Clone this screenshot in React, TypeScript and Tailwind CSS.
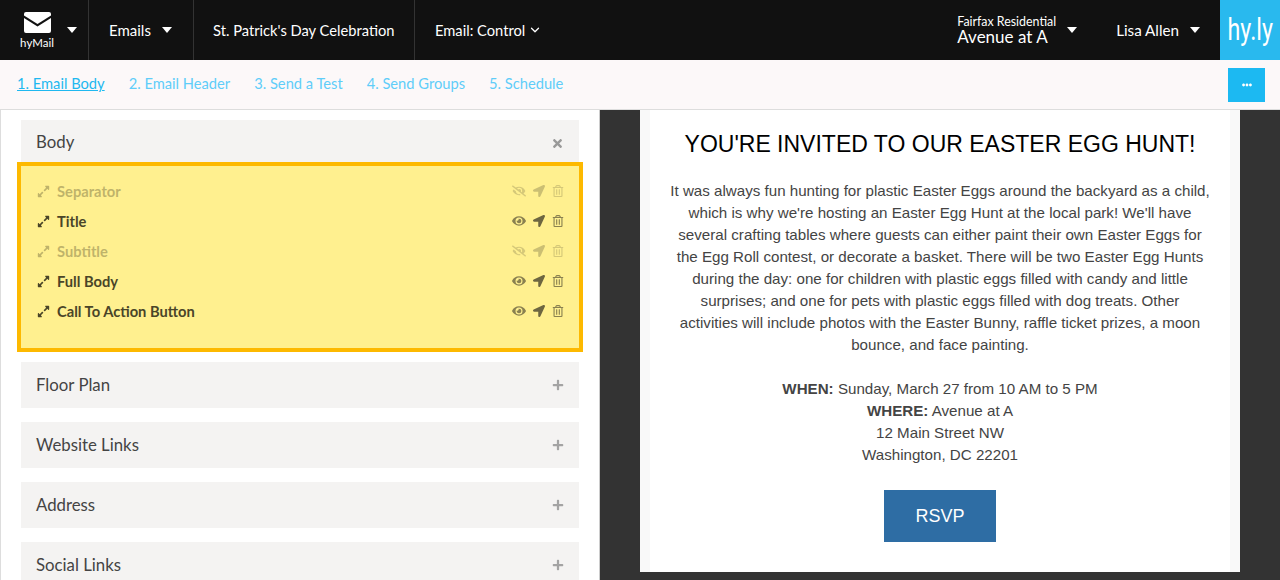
import { ChevronDown } from "lucide-react";
import {
  FaEllipsisH,
  FaExpandAlt,
  FaEye,
  FaEyeSlash,
  FaLocationArrow,
  FaPlus,
  FaRegTrashAlt,
  FaTimes,
} from "react-icons/fa";

const steps = ["1. Email Body", "2. Email Header", "3. Send a Test", "4. Send Groups", "5. Schedule"];

const rows = [
  { name: "Separator", hidden: true },
  { name: "Title", hidden: false },
  { name: "Subtitle", hidden: true },
  { name: "Full Body", hidden: false },
  { name: "Call To Action Button", hidden: false },
];

function Caret() {
  return (
    <svg width="10" height="6" viewBox="0 0 10 6" className="shrink-0">
      <path d="M0 0h10L5 6z" fill="#fff" />
    </svg>
  );
}

function Section({ title }: { title: string }) {
  return (
    <div className="flex h-[46px] shrink-0 items-center justify-between bg-[#f4f3f2] pl-[15px] pr-[15px]">
      <span className="text-[16.8px] text-[#444]">{title}</span>
      <FaPlus className="text-[12px] text-[#a3a3a3]" />
    </div>
  );
}

export default function App() {
  return (
    <div className="flex h-[580px] flex-col overflow-hidden bg-white font-['Lato',sans-serif]">
      {/* top bar */}
      <header className="flex h-[60px] shrink-0 items-stretch bg-[#111] text-white">
        <div className="flex w-[89px] items-center border-r border-[#333] pl-5">
          <div className="flex w-[34px] flex-col items-center">
            <svg width="27" height="21" viewBox="0 0 27 21">
              <path d="M2 0h23a2 2 0 0 1 2 2v1.5L13.5 12 0 3.5V2a2 2 0 0 1 2-2z" fill="#fff" />
              <path d="M0 6l13.5 8.5L27 6v13a2 2 0 0 1-2 2H2a2 2 0 0 1-2-2z" fill="#fff" />
            </svg>
            <span className="mt-[3px] text-[11.5px] leading-[13px]">hyMail</span>
          </div>
          <span className="ml-[13px]">
            <Caret />
          </span>
        </div>
        <div className="flex w-[105px] items-center gap-[11px] border-r border-[#333] pl-5 text-[15px]">
          Emails <Caret />
        </div>
        <div className="flex w-[221px] items-center border-r border-[#333] pl-[19px] text-[14.7px]">
          St. Patrick's Day Celebration
        </div>
        <div className="flex items-center gap-[3px] pl-5 text-[14.7px]">
          Email: Control <ChevronDown size={14} strokeWidth={2.2} />
        </div>
        <div className="ml-auto flex items-center">
          <div className="flex flex-col">
            <span className="text-[12.4px] leading-[13px]">Fairfax Residential</span>
            <span className="text-[17px] leading-[18px]">Avenue at A</span>
          </div>
          <span className="ml-[11px]">
            <Caret />
          </span>
          <span className="ml-[39px] text-[15.2px]">Lisa Allen</span>
          <span className="ml-[11px] mr-5">
            <Caret />
          </span>
        </div>
        <div className="flex w-[60px] items-center justify-center bg-[#29b9ee] text-[31px] font-['Roboto',sans-serif]">
          <span className="scale-x-75">hy.ly</span>
        </div>
      </header>

      {/* steps */}
      <nav className="flex h-[50px] shrink-0 items-center border-b border-[#ddd] bg-[#fcf8f9] pb-[2px] pl-[17px] pr-[15px] text-[14.7px] text-[#5fcdf9]">
        <div className="flex gap-6">
          {steps.map((step, i) => (
            <span key={step} className={i === 0 ? "text-[#1fb8f0] underline" : ""}>
              {step}
            </span>
          ))}
        </div>
        <button className="ml-auto mt-[2px] flex h-[34px] w-[37px] items-center justify-center bg-[#1cb9f2] text-[10px] text-white">
          <FaEllipsisH />
        </button>
      </nav>

      <div className="flex min-h-0 flex-1">
        {/* left column */}
        <aside className="flex w-[600px] shrink-0 flex-col overflow-hidden border-x border-l-[#ddd] border-r-[#ccc] pt-[10px]">
          <div className="mx-5 flex h-[42px] shrink-0 items-start justify-between bg-[#f4f3f2] pl-[15px] pr-[15px] pt-[12px]">
            <span className="text-[16.8px] leading-[20px] text-[#444]">Body</span>
            <FaTimes className="mt-[5px] text-[13px] text-[#999]" />
          </div>
          <div className="mx-4 flex h-[190px] shrink-0 flex-col border-4 border-[#fdb900] bg-[#fff08f] pl-4 pr-[15px] pt-[10px]">
            {rows.map((row) => (
              <div
                key={row.name}
                className={`flex h-[30px] items-center text-[14.7px] font-bold text-[#4a4528] ${row.hidden ? "opacity-35" : ""}`}
              >
                <FaExpandAlt className="mr-[7px] text-[13px]" />
                <span>{row.name}</span>
                <span className="ml-auto flex items-center gap-[7px] text-[#8a8150]">
                  {row.hidden ? <FaEyeSlash className="text-[14px]" /> : <FaEye className="text-[14px]" />}
                  <FaLocationArrow className="text-[12px] text-[#6d6640]" />
                  <FaRegTrashAlt className="text-[12px]" />
                </span>
              </div>
            ))}
          </div>
          <div className="mx-5 mt-[10px] flex flex-col gap-[14px]">
            {["Floor Plan", "Website Links", "Address", "Social Links"].map((title) => (
              <Section key={title} title={title} />
            ))}
          </div>
        </aside>

        {/* email preview */}
        <main className="min-w-0 flex-1 bg-[#333] px-10">
          <div className="h-[462px] bg-[#f9f9f9] px-[10px]">
            <div className="flex h-full flex-col items-center bg-white px-5 text-center font-['Liberation_Sans',sans-serif] text-[15.15px] leading-[22px] text-[#444]">
              <h1 className="mt-[19px] whitespace-nowrap text-[23px] leading-[30px] text-black">YOU'RE INVITED TO OUR EASTER EGG HUNT!</h1>
              <p className="mt-[21px]">
                It was always fun hunting for plastic Easter Eggs around the backyard as a child, which is why we're hosting an Easter Egg Hunt at the local park! We'll have several crafting tables where guests can either paint their own Easter Eggs for the Egg Roll contest, or decorate a basket. There will be two Easter Egg Hunts during the day: one for children with plastic eggs filled with candy and little surprises; and one for pets with plastic eggs filled with dog treats. Other activities will include photos with the Easter Bunny, raffle ticket prizes, a moon bounce, and face painting.
              </p>
              <p className="mt-[22px]">
                <b>WHEN:</b> Sunday, March 27 from 10 AM to 5 PM
                <br />
                <b>WHERE:</b> Avenue at A
                <br />
                12 Main Street NW
                <br />
                Washington, DC 22201
              </p>
              <div className="mt-6 flex h-[52px] w-[112px] items-center justify-center bg-[#2e6da4] text-[18px] text-white">
                RSVP
              </div>
            </div>
          </div>
        </main>
      </div>
    </div>
  );
}
